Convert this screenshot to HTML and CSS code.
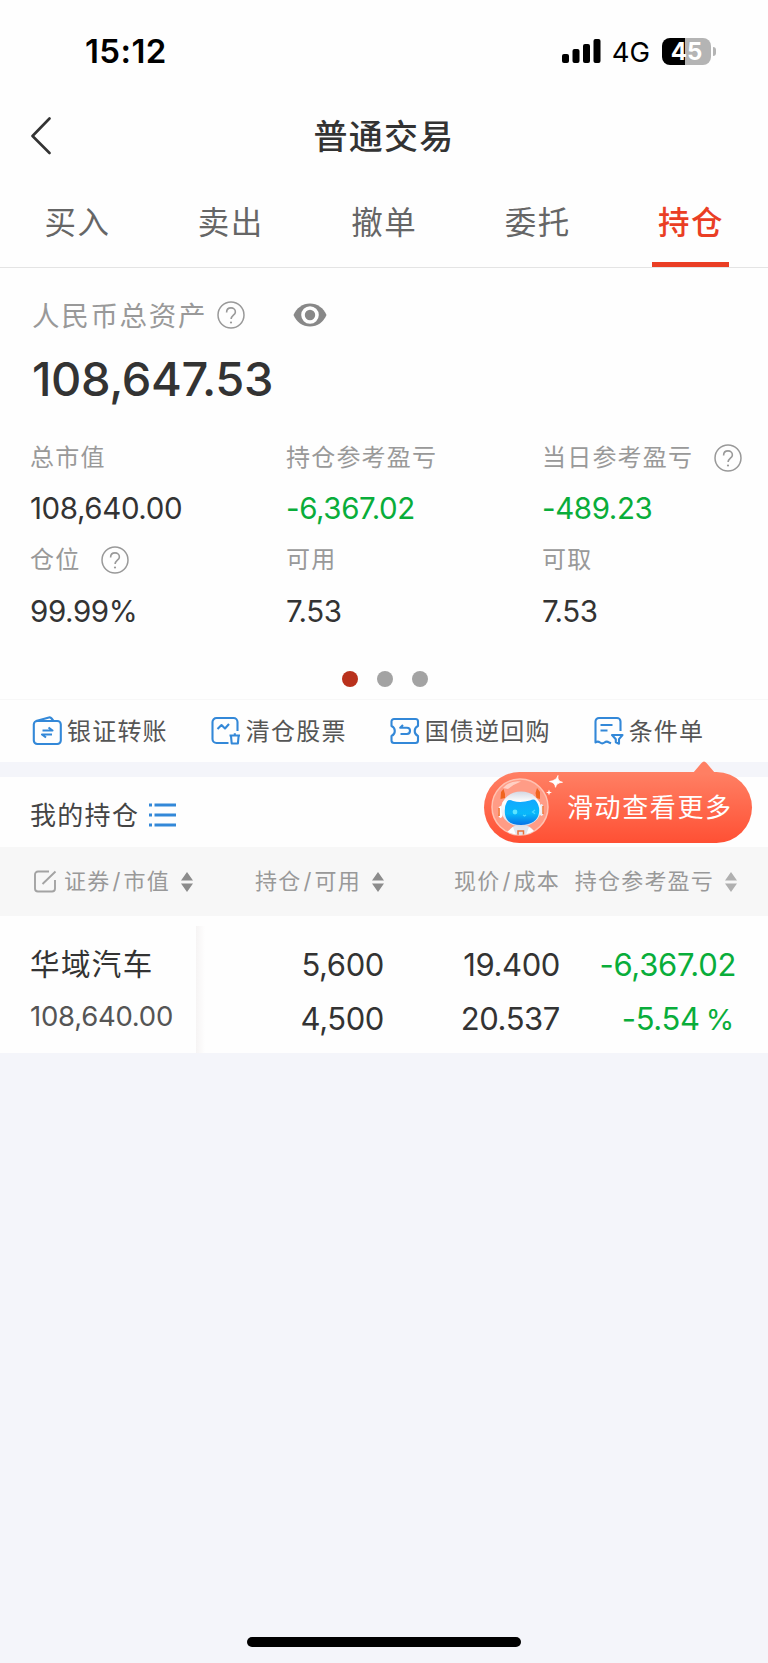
FILE: index.html
```
<!DOCTYPE html>
<html lang="zh-CN">
<head>
  <meta charset="UTF-8">
  <meta name="viewport" content="width=device-width, initial-scale=1.0">
  <title>普通交易</title>
  <link rel="stylesheet" href="styles.css">
</head>
<body>

<!-- 公用图标 -->
<svg class="defs" width="0" height="0">
  <symbol id="help" viewBox="0 0 28 28">
    <circle cx="14" cy="14" r="13" fill="none" stroke="#999" stroke-width="1.5"/>
    <path d="M9.600 11.400c0-2.700 1.900-4.500 4.400-4.500s4.400 1.700 4.400 4c0 3.100-4.300 3.500-4.300 7.200" fill="none" stroke="#999" stroke-width="1.6"/>
    <circle cx="14" cy="21.500" r="1.100" fill="#999"/>
  </symbol>
  <symbol id="sort" viewBox="0 0 12 20">
    <path d="M6 0l6 8.500H0zM6 20l6-8.500H0z" fill="currentColor"/>
  </symbol>
</svg>

<header>
  <div class="status">
    <span class="time">15:12</span>
    <div class="status-right">
      <svg class="signal" width="39" height="24" viewBox="0 0 39 24">
        <rect x="0" y="15" width="7" height="9" rx="2"/>
        <rect x="10.500" y="10" width="7" height="14" rx="2"/>
        <rect x="21" y="5" width="7" height="19" rx="2"/>
        <rect x="31.500" y="0" width="7" height="24" rx="2"/>
      </svg>
      <span class="network">4G</span>
      <span class="battery">45</span>
      <span class="battery-tip"></span>
    </div>
  </div>

  <div class="title-bar">
    <svg class="back" width="22" height="40" viewBox="0 0 22 40">
      <path d="M19.500 1.500L2.500 19l17 17" fill="none" stroke="#333" stroke-width="2.600" stroke-linecap="round" stroke-linejoin="round"/>
    </svg>
    <h1>普通交易</h1>
  </div>

  <nav class="tabs">
    <a>买入</a>
    <a>卖出</a>
    <a>撤单</a>
    <a>委托</a>
    <a class="active">持仓</a>
  </nav>
</header>

<section class="assets">
  <div class="assets-head">
    <span>人民币总资产</span>
    <svg class="help" width="28" height="28"><use href="#help"/></svg>
    <svg class="eye" width="34" height="24" viewBox="0 0 34 24">
      <path d="M0.500 12C3.500 5 9.500 0.500 17 0.500S30.500 5 33.500 12C30.500 19 24.500 23.500 17 23.500S3.500 19 0.500 12z" fill="#888"/>
      <circle cx="17" cy="12" r="7" fill="none" stroke="#fff" stroke-width="3.600"/>
    </svg>
  </div>
  <div class="total">108,647.53</div>

  <div class="stats">
    <div class="label">总市值</div>
    <div class="label">持仓参考盈亏</div>
    <div class="label">当日参考盈亏<svg class="help" width="28" height="28"><use href="#help"/></svg></div>
    <div class="value">108,640.00</div>
    <div class="value green">-6,367.02</div>
    <div class="value green">-489.23</div>
    <div class="label">仓位<svg class="help" width="28" height="28"><use href="#help"/></svg></div>
    <div class="label">可用</div>
    <div class="label">可取</div>
    <div class="value">99.99%</div>
    <div class="value">7.53</div>
    <div class="value">7.53</div>
  </div>

  <div class="dots">
    <i class="on"></i><i></i><i></i>
  </div>
</section>

<section class="links">
  <a class="link">
    <svg width="30" height="30" viewBox="0 0 30 30">
      <rect x="1.800" y="5" width="27" height="23" rx="3.500"/>
      <path d="M4 5l13-3.500c1.200-.3 2 .2 2.600 1L21.500 5"/>
      <path d="M10.500 14.500h10l-4-3M20 18.500H10l4 3"/>
    </svg>
    <span>银证转账</span>
  </a>
  <a class="link">
    <svg width="30" height="30" viewBox="0 0 30 30">
      <path d="M26.500 15V6a4 4 0 0 0-4-4h-17a4 4 0 0 0-4 4v17a4 4 0 0 0 4 4h12"/>
      <path d="M6.500 13l4-4 3.500 3.500 4-4.500"/>
      <path d="M18.500 19.500h10.500M23.800 19v-1.800M20 20l.7 7.500h6.200l.7-7.500"/>
    </svg>
    <span>清仓股票</span>
  </a>
  <a class="link">
    <svg width="30" height="30" viewBox="0 0 30 30">
      <path d="M4 3h21.500a2.500 2.500 0 0 1 2.500 2.500V10c-2.200 1-3.300 2.600-3.300 5s1.100 4 3.300 5v4.500a2.500 2.500 0 0 1-2.500 2.500H4a2.500 2.500 0 0 1-2.500-2.500V20c2.200-1 3.300-2.600 3.300-5s-1.100-4-3.300-5V5.500A2.500 2.500 0 0 1 4 3z"/>
      <path d="M13 9l-2.800 2.800H17c2 0 3 1.400 3 3s-1 3.200-3 3.200h-6.500"/>
    </svg>
    <span>国债逆回购</span>
  </a>
  <a class="link">
    <svg width="30" height="30" viewBox="0 0 30 30">
      <path d="M26.500 15V5.500a3.500 3.500 0 0 0-3.500-3.500H5a3.500 3.500 0 0 0-3.500 3.500v21c1.500-1.200 3-1.200 4.500 0s3 1.200 4.500 0 3-1.200 4.500 0l2 .8"/>
      <path d="M6.500 9h12M6.500 14.500h7"/>
      <path d="M18 19h10.500l-3.500 4.200v4.600l-3.200-1.500v-3.100z"/>
    </svg>
    <span>条件单</span>
  </a>
</section>

<section class="holdings">
  <div class="holdings-head">
    <h2>我的持仓</h2>
    <svg width="27" height="26" viewBox="0 0 27 26" fill="#3388d8">
      <path d="M0 .5h3v3H0zM5.500 .5H27v3H5.500zM0 10.500h3v3H0zM5.500 10.500H27v3H5.500zM0 20.500h3v3H0zM5.500 20.500H27v3H5.500z"/>
    </svg>

    <div class="tip">
      <svg class="tip-arrow" width="22" height="12" viewBox="0 0 22 12">
        <path d="M0 12L8.500 2Q11 -1 13.500 2L22 12z" fill="#ff7f63"/>
      </svg>
      <svg class="robot" width="76" height="64" viewBox="0 0 76 64">
        <defs>
          <linearGradient id="face" x1="0" y1="0" x2="0" y2="1">
            <stop offset="0" stop-color="#12a8ff"/>
            <stop offset=".55" stop-color="#08b8fa"/>
            <stop offset="1" stop-color="#0873e8"/>
          </linearGradient>
          <linearGradient id="head" x1="0" y1="0" x2="0" y2="1">
            <stop offset="0" stop-color="#d3d8e4"/>
            <stop offset=".3" stop-color="#fff"/>
            <stop offset="1" stop-color="#d9deea"/>
          </linearGradient>
          <clipPath id="bubble"><circle cx="31" cy="33" r="28"/></clipPath>
        </defs>
        <circle cx="31" cy="33" r="28" fill="#ff9c86" stroke="#ffc2b2" stroke-width="1.500"/>
        <path d="M14 14Q21 6 32 7.500Q25 10 19 15z" fill="#ffd0c4"/>
        <g clip-path="url(#bubble)">
          <path d="M19 64c0-8 3-13 13-13s14 5 14 13z" fill="#e3e6ef"/>
          <path d="M18 58l6-5 3 8zM45 57l-5-4-3 8z" fill="#fff"/>
          <path d="M29 57h5.500v6H29z" fill="none" stroke="#e8703c" stroke-width="1.500"/>
        </g>
        <path d="M11.500 25l.5-7 2.500-3 1.500 5v4zM51 25l0-7-3-4-1.500 5 1 5z" fill="#f0641e"/>
        <ellipse cx="11.500" cy="38" rx="2.500" ry="6" fill="#fff"/>
        <path d="M10 34v8" stroke="#f0641e" stroke-width="1.500"/>
        <ellipse cx="52.500" cy="36" rx="2.200" ry="6" fill="#eceff5"/>
        <path d="M54 32v8" stroke="#f0641e" stroke-width="1.300"/>
        <ellipse cx="32" cy="35" rx="20" ry="17.500" fill="url(#head)"/>
        <path d="M18 27.500q2-2.500 6-.5 8 2 17-.5 4-2 6 .5 4 5 3 12-2 11.500-18 12-14 0-16-10.500-1-8 2-13z" fill="url(#face)"/>
        <circle cx="26" cy="38" r="2.400" fill="#5ce4ff"/>
        <path d="M46 36l-2.500 2 2.500 1.800M34 41l1.500 1 1.500-1" fill="none" stroke="#4ad8ff" stroke-width="1.300"/>
        <path d="M69 1.500q-1.200 5.500 4.500 6.800-6 .2-7 5-.4-4.800-6-5.800 7-1 8.500-6z" fill="#fff" stroke="#fff" stroke-width=".8"/>
        <path d="M60 15.500l.7 2.300 2.300.7-2.300.7-.7 2.300-.7-2.300-2.300-.7 2.300-.7z" fill="#fff"/>
      </svg>
      <span>滑动查看更多</span>
    </div>
  </div>

  <div class="row thead">
    <div class="col-name">
      <svg class="edit" width="24" height="24" viewBox="0 0 24 24">
        <path d="M16 1.500H5a3 3 0 0 0-3 3v14a3 3 0 0 0 3 3h14a3 3 0 0 0 3-3V10M9.500 14L22.500 1.500" fill="none" stroke="#a3a3a3" stroke-width="1.900"/>
      </svg>
      <span>证券<b>/</b>市值</span>
      <svg class="sort" width="12" height="20"><use href="#sort"/></svg>
    </div>
    <div class="col-count">
      <span>持仓<b>/</b>可用</span>
      <svg class="sort" width="12" height="20"><use href="#sort"/></svg>
    </div>
    <div class="col-price"><span>现价<b>/</b>成本</span></div>
    <div class="col-profit">
      <span>持仓参考盈亏</span>
      <svg class="sort light" width="12" height="20"><use href="#sort"/></svg>
    </div>
  </div>

  <div class="row stock">
    <div class="col-name">
      <p class="name">华域汽车</p>
      <p class="market">108,640.00</p>
    </div>
    <div class="col-count">
      <p>5,600</p>
      <p>4,500</p>
    </div>
    <div class="col-price">
      <p>19.400</p>
      <p>20.537</p>
    </div>
    <div class="col-profit green">
      <p>-6,367.02</p>
      <p class="rate">-5.54<small>%</small></p>
    </div>
  </div>
</section>

<footer><div class="home-bar"></div></footer>

</body>
</html>
```
FILE: styles.css
```
* {
  box-sizing: border-box;
}

body {
  font-family: Inter, "Noto Sans CJK SC", sans-serif;
  margin: 0;
  min-height: 1663px;
  display: flex;
  flex-direction: column;
  background-color: #f4f5fa;
  color: #333;
  overflow-x: hidden;
}

svg {
  display: block;
  flex: none;
}

.defs {
  position: absolute;
}

h1, h2, p {
  margin: 0;
  font-weight: 400;
}

span, a, p, h1, h2 {
  white-space: nowrap;
}

/* 顶部 */
header {
  height: 268px;
  background-color: #fefefe;
  border-bottom: 1px solid #e4e4e4;
}

.status {
  display: flex;
  justify-content: space-between;
  height: 102px;
  padding: 0 52px 0 85px;
  align-items: center;
  color: #000;
}

.time {
  font-size: 33px;
  font-weight: 600;
  letter-spacing: 0.4px;
  line-height: 40px;
}

.status-right {
  display: flex;
  align-items: center;
}

.network {
  font-size: 27.500px;
  line-height: 30px;
  margin-left: 11px;
  margin-top: 2px;
}

.battery {
  width: 49px;
  height: 27px;
  margin-left: 12px;
  border-radius: 8px;
  background: linear-gradient(90deg, #000 23px, #b4b4b4 23px);
  color: #fff;
  font-size: 24px;
  font-weight: 700;
  line-height: 28px;
  text-align: center;
}

.battery-tip {
  width: 3px;
  height: 9px;
  margin-left: 2px;
  border-radius: 0 4px 4px 0;
  background-color: #b4b4b4;
}

.title-bar {
  display: grid;
  grid-template-columns: 60px 1fr 60px;
  align-items: center;
  height: 70px;
}

.back {
  margin-left: 30px;
}

h1 {
  font-size: 34px;
  font-weight: 500;
  letter-spacing: 1.2px;
  line-height: 50px;
  text-align: center;
}

.tabs {
  display: grid;
  grid-template-columns: repeat(5, 1fr);
  justify-items: center;
  padding-right: 1px;
}

.tabs a {
  width: 77px;
  height: 95px;
  line-height: 101px;
  font-size: 31.500px;
  letter-spacing: 1.5px;
  text-indent: 1.5px;
  text-align: center;
  color: #666;
}

.tabs .active {
  color: #ea3e24;
  font-weight: 500;
  border-bottom: 5px solid #ea3e24;
}

/* 资产 */
.assets {
  height: 431px;
  background-color: #fefefe;
}

.assets-head {
  display: flex;
  align-items: center;
  height: 62px;
  padding: 32px 0 0 32px;
  font-size: 27.500px;
  line-height: 30px;
  letter-spacing: 1.700px;
  color: #999;
}

.assets-head span {
  padding-top: 2px;
}

.assets-head .help {
  margin-left: 10px;
}

.eye {
  margin-left: 48px;
}

.total {
  padding-left: 32px;
  margin-top: 24px;
  font-size: 47px;
  font-weight: 500;
  letter-spacing: -0.4px;
  line-height: 50px;
}

.stats {
  display: grid;
  grid-template-columns: 256px 256px 1fr;
  grid-auto-rows: 51.300px;
  align-items: center;
  padding-left: 30px;
  margin-top: 27px;
}

.label {
  display: flex;
  align-items: center;
  font-size: 24px;
  letter-spacing: 1.200px;
  line-height: 26px;
  padding-top: 2px;
  color: #999;
}

.label .help {
  margin-left: 20.500px;
}

.value {
  font-size: 29.500px;
  letter-spacing: -0.4px;
  line-height: 40px;
}

.green {
  color: #09ad3a;
}

.dots {
  display: flex;
  justify-content: center;
  gap: 19px;
  padding-left: 1px;
  margin-top: 35px;
}

.dots i {
  width: 16px;
  height: 16px;
  border-radius: 50%;
  background-color: #a3a3a3;
}

.dots .on {
  background-color: #b9311c;
}

/* 快捷入口 */
.links {
  display: flex;
  gap: 43px;
  height: 63px;
  padding-left: 32px;
  align-items: center;
  background-color: #fefefe;
  border-top: 1px solid #f7f7f7;
}

.link {
  display: flex;
  align-items: center;
  gap: 5px;
  font-size: 24px;
  letter-spacing: 1.200px;
  line-height: 30px;
  color: #555;
}

.link span {
  padding-top: 1px;
}

.link svg {
  fill: none;
  stroke: #3388d8;
  stroke-width: 2.100;
  stroke-linejoin: round;
}

/* 持仓 */
.holdings {
  margin-top: 15px;
  background-color: #fefefe;
}

.holdings-head {
  position: relative;
  display: flex;
  align-items: center;
  gap: 10px;
  height: 70px;
  padding: 7px 0 0 30px;
}

h2 {
  font-size: 26px;
  letter-spacing: 1.300px;
  line-height: 40px;
  padding-top: 1px;
  color: #444;
}

/* 浮在列表上方的提示 */
.tip {
  position: absolute;
  top: -5px;
  right: 16px;
  display: flex;
  align-items: center;
  width: 268px;
  height: 71px;
  padding-left: 5px;
  border-radius: 36px;
  background: linear-gradient(#ff8064, #ff5034);
  color: #fff;
  font-size: 26px;
  letter-spacing: 1.600px;
}

.tip-arrow {
  position: absolute;
  top: -11px;
  right: 37px;
}

.robot {
  margin-top: -4px;
}

.tip span {
  margin-left: 2px;
  line-height: 40px;
  padding-top: 1px;
}

.row {
  display: grid;
  grid-template-columns: 197px 187px 176px 1fr;
}

.thead {
  height: 69px;
  align-items: center;
  background-color: #f7f7f7;
  color: #999;
  font-size: 22px;
  letter-spacing: 1.200px;
}

.thead div {
  display: flex;
  align-items: center;
  justify-content: flex-end;
}

.thead span {
  line-height: 30px;
  padding-bottom: 2px;
}

.thead b {
  font-weight: 400;
  margin: 0 2px;
}

.thead .col-name {
  justify-content: flex-start;
  padding-left: 33px;
}

.edit {
  margin-right: 7px;
}

.sort {
  margin-left: 11px;
  color: #8c8c8c;
}

.light {
  color: #b0b0b0;
}

.thead .col-profit {
  padding-right: 31px;
}

.stock {
  height: 137px;
  font-size: 31px;
  letter-spacing: -0.4px;
  text-align: right;
  background: linear-gradient(90deg, #f6f4f4, #fefefe) no-repeat 196px 10px / 9px 100%;
}

.stock div {
  padding-top: 22px;
}

.stock p {
  line-height: 53.500px;
}

.stock .col-name {
  padding-left: 30px;
  text-align: left;
}

.stock .name {
  font-size: 29.500px;
  letter-spacing: 1.400px;
}

.stock .market {
  font-size: 27.500px;
  letter-spacing: -0.25px;
  line-height: 49px;
  color: #555;
}

.stock .col-profit {
  padding-right: 32px;
  letter-spacing: -0.3px;
}

.rate small {
  font-size: 29px;
  margin: 0 2px 0 6px;
}

footer {
  margin-top: auto;
  padding-bottom: 16px;
}

.home-bar {
  width: 274px;
  height: 10px;
  margin: 0 auto;
  border-radius: 5px;
  background-color: #000;
}
```
